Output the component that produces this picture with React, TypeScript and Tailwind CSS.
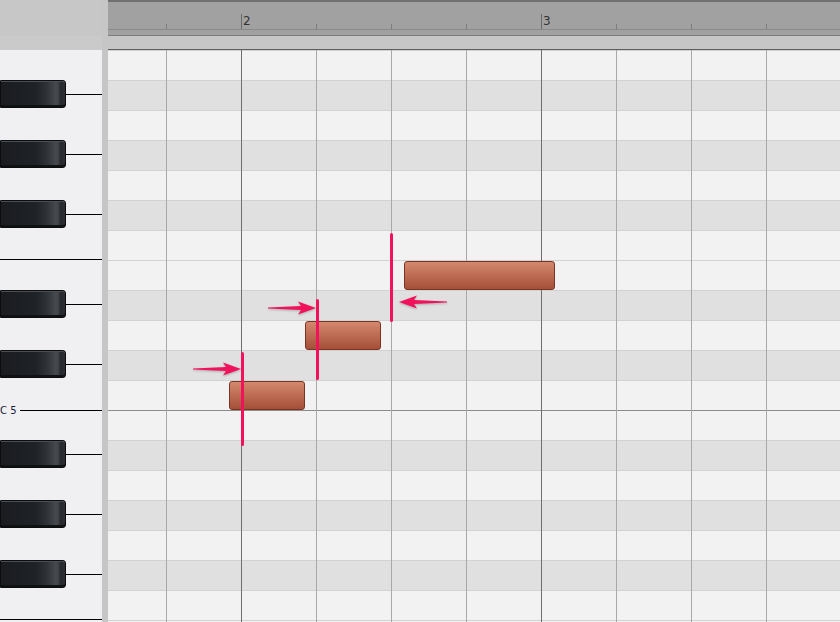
import React from "react";

const ROWS = 19;
const DARK = new Set([1, 3, 5, 8, 10, 13, 15, 17]);

function BlackKey() {
  return (
    <div className="relative h-[28px] w-[66px] shrink-0 rounded-r-[3px] border border-[#0b0c0e] bg-[linear-gradient(to_right,#1a1c20_0%,#1f2226_55%,#2f3237_72%,#474a4f_86%,#3a3d41_91%,#26282c_92%,#2c2e32_100%)] shadow-[inset_0_1px_0_#4b4e53,inset_0_-2px_0_#101113]" />
  );
}

function Arrow({ dir }: { dir: "right" | "left" }) {
  const d =
    dir === "right"
      ? "M0 6.6 L33 5 L30 0.6 L48 7 L30 13.4 L33 9 L0 7.4 Z"
      : "M48 6.6 L15 5 L18 0.6 L0 7 L18 13.4 L15 9 L48 7.4 Z";
  return (
    <svg width="48" height="14" viewBox="0 0 48 14" className="drop-shadow-[0_1px_1px_rgba(0,0,0,0.25)]">
      <path d={d} fill="#f2125c" />
    </svg>
  );
}

export default function App() {
  const rows = Array.from({ length: ROWS }, (_, i) => i);
  const segs = Array.from({ length: 9 }, (_, i) => i);
  return (
    <div className="flex h-[622px] w-[840px] flex-col overflow-hidden bg-[#c8c8c8] font-['DejaVu_Sans',sans-serif]">
      {/* header */}
      <div className="flex h-[50px] shrink-0">
        <div className="flex w-[102px] shrink-0 flex-col">
          <div className="h-[36px] bg-[#c7c7c7]" />
          <div className="h-[14px] bg-[#cacaca]" />
        </div>
        <div className="w-[6px] shrink-0 bg-[#c6c6c6]" />
        <div className="flex min-w-0 flex-1 flex-col border-b border-[#5e5e5e]">
          <div className="flex h-[30px] shrink-0 border-t-2 border-b border-[#707070] border-b-[#8a8a8a] bg-[#a1a1a1]">
            <div className="w-[58px] shrink-0" />
            {segs.map((i) => {
              const bar = i === 1 || i === 5;
              return (
                <div key={i} className="flex w-[75px] shrink-0 items-end">
                  {bar ? (
                    <>
                      <div className="h-[15px] w-px bg-[#6a6a6a]" />
                      <span className="mb-[2px] ml-[1px] self-end text-[12px] leading-none text-[#333]">
                        {i === 1 ? "2" : "3"}
                      </span>
                    </>
                  ) : (
                    <div className="h-[5px] w-px bg-[#7c7c7c]" />
                  )}
                </div>
              );
            })}
          </div>
          <div className="h-[6px] shrink-0 border-b border-[#7c7c7c] bg-[#a1a1a1]" />
          <div className="flex-1 bg-[#c6c6c6]" />
        </div>
      </div>

      {/* body */}
      <div className="flex min-h-0 flex-1">
        {/* keyboard */}
        <div className="flex w-[102px] shrink-0 flex-col bg-[#f0f0f3]">
          {rows.map((i) => {
            const black = DARK.has(i);
            const eLine = i === 6 || i === 18;
            const cLine = i === 11;
            return (
              <div
                key={i}
                className={`relative flex h-[30px] shrink-0 items-start ${eLine ? "border-b border-black" : ""}`}
              >
                {black && (
                  <>
                    <BlackKey />
                    <div className="mt-[14px] h-px flex-1 bg-black" />
                  </>
                )}
                {cLine && (
                  <div className="absolute bottom-[-6px] left-0 right-0 flex h-[11px] items-center gap-[3px]">
                    <span className="text-[10px] leading-none text-[#1c1c3c]">C 5</span>
                    <div className="h-px flex-1 bg-black" />
                  </div>
                )}
              </div>
            );
          })}
        </div>
        <div className="w-[6px] shrink-0 bg-[#c6c6c6]" />

        {/* grid */}
        <div className="relative min-w-0 flex-1 overflow-hidden">
          <div className="flex flex-col">
            {rows.map((i) => (
              <div
                key={i}
                className={`h-[30px] shrink-0 border-t ${
                  i === 12 ? "border-[#8c8c8c]" : "border-[#d2d2d2]"
                } ${DARK.has(i) ? "bg-[#e0e0e0]" : "bg-[#f2f2f2]"}`}
              />
            ))}
            <div className="h-[10px] border-t border-[#d2d2d2] bg-[#f2f2f2]" />
          </div>

          {/* vertical lines */}
          <div className="pointer-events-none absolute inset-0 flex">
            <div className="w-[58px] shrink-0" />
            {segs.map((i) => (
              <div
                key={i}
                className={`w-[75px] shrink-0 border-l ${
                  i === 1 || i === 5 ? "border-[#6e6e6e]" : "border-[#a8a8a8]"
                }`}
              />
            ))}
          </div>

          {/* notes */}
          <div className="absolute left-[121px] top-[331px] h-[29px] w-[76px] rounded-[3px] border border-[#7a3422] bg-[linear-gradient(to_bottom,#d4886e,#a54f38)]" />
          <div className="absolute left-[197px] top-[271px] h-[29px] w-[76px] rounded-[3px] border border-[#7a3422] bg-[linear-gradient(to_bottom,#d4886e,#a54f38)]" />
          <div className="absolute left-[296px] top-[211px] h-[29px] w-[151px] rounded-[3px] border border-[#7a3422] bg-[linear-gradient(to_bottom,#d4886e,#a54f38)]" />

          {/* pink markers */}
          <div className="absolute left-[133px] top-[302px] h-[94px] w-[3px] rounded-full bg-[#f2125c]" />
          <div className="absolute left-[208px] top-[249px] h-[81px] w-[3px] rounded-full bg-[#f2125c]" />
          <div className="absolute left-[282px] top-[183px] h-[89px] w-[3px] rounded-full bg-[#f2125c]" />

          {/* arrows */}
          <div className="absolute left-[85px] top-[312px]">
            <Arrow dir="right" />
          </div>
          <div className="absolute left-[160px] top-[251px]">
            <Arrow dir="right" />
          </div>
          <div className="absolute left-[291px] top-[245px]">
            <Arrow dir="left" />
          </div>
        </div>
      </div>
    </div>
  );
}
